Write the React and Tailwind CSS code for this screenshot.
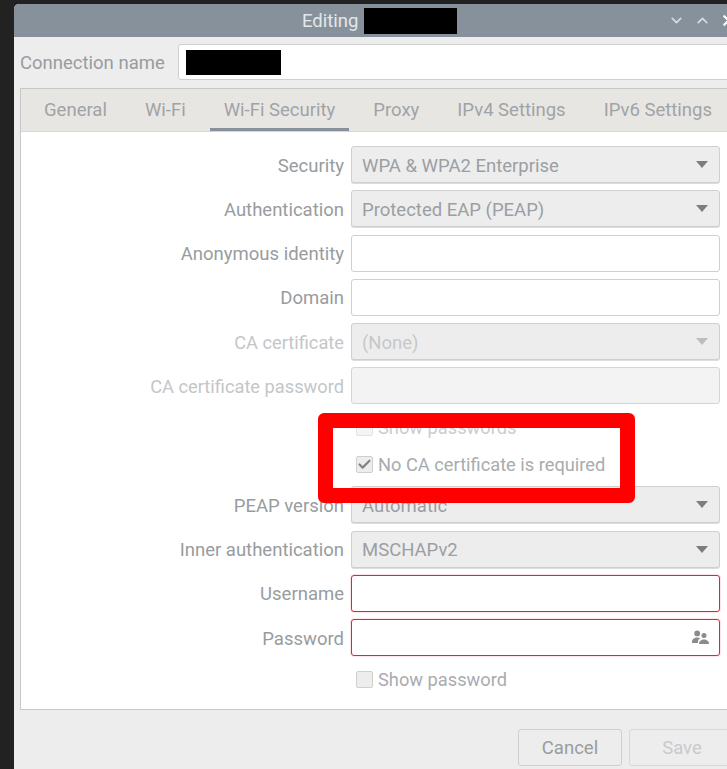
import React from "react";
import { ChevronDown, ChevronUp, X, Check } from "lucide-react";

const TABS = [
  { label: "General" },
  { label: "Wi-Fi" },
  { label: "Wi-Fi Security", active: true },
  { label: "Proxy" },
  { label: "IPv4 Settings" },
  { label: "IPv6 Settings" },
];

function Redacted({ className }) {
  return <div className={`bg-black ${className}`} />;
}

function Row({ label, dim, className = "", children }) {
  return (
    <div className={`flex h-[37px] items-center gap-[7px] ${className}`}>
      <span className={`w-[323px] pt-[2px] text-right ${dim ? "text-[18.25px] text-[#c4c6c8]" : "text-[#989ca0]"}`}>{label}</span>
      {children}
    </div>
  );
}

function Combo({ value, dim }) {
  return (
    <div className="flex h-full w-[369px] items-center justify-between rounded-[3px] border border-[#cfcfcd] bg-[#ededed] pl-[10px] pr-[11px] shadow-[0_1px_0_#dddddd]">
      <span className={`pt-[2px] ${dim ? "text-[#c6c8ca]" : "text-[#9b9fa3]"}`}>{value}</span>
      <div className={`h-0 w-0 border-x-[6px] border-t-[7px] border-x-transparent ${dim ? "border-t-[#bdbdbd]" : "border-t-[#7d7d7d]"}`} />
    </div>
  );
}

function Entry({ error, disabled, children }) {
  const look = error
    ? "border-[#e0272f] bg-white shadow-[0_0_0_1px_rgba(230,80,90,0.15)]"
    : disabled
      ? "border-[#d5d5d3] bg-[#f3f3f3]"
      : "border-[#cfcfcd] bg-white";
  return (
    <div className={`flex h-full w-[369px] items-center justify-end rounded-[3px] border pr-[10px] ${look}`}>
      {children}
    </div>
  );
}

function CheckRow({ label, checked, className = "" }) {
  return (
    <div className={`flex h-[22px] items-center pl-[335px] text-[18.25px] text-[#a8acb0] ${className}`}>
      <div className="flex h-[17px] w-[17px] items-center justify-center rounded-[2px] border border-[#cfcfcd] bg-[#ededed]">
        {checked && <Check size={15} strokeWidth={3.5} className="text-[#858585]" />}
      </div>
      <span className="ml-[5px] pt-[2px]">{label}</span>
    </div>
  );
}

function PeopleIcon() {
  return (
    <svg width="17" height="15" viewBox="0 0 17 15" className="text-[#8b8b8b]" fill="currentColor">
      <circle cx="5.2" cy="3.4" r="2.9" />
      <circle cx="12" cy="5.6" r="2.5" />
      <path d="M0 12c0-3 2.4-4.6 5.2-4.6 1.1 0 2.2.3 3 .8C6.8 9 6 10.3 6 12v1H0z" />
      <path d="M7 14c0-3 2.3-4.6 5-4.6S17 11 17 14z" />
    </svg>
  );
}

export default function App() {
  return (
    <div className="h-[769px] w-[727px] overflow-hidden bg-[#222222] pl-[14px] pt-[4px] font-['Roboto',sans-serif] text-[18.5px] leading-[22px]">
      <div className="relative h-[765px] w-[760px] overflow-hidden rounded-tl-[5px] bg-[#ededed]">
        {/* Title bar */}
        <div className="flex h-[33px] items-center bg-[#87919b] pl-[288px]">
          <span className="text-[#e4e7ea]">Editing</span>
          <Redacted className="ml-[6px] h-[26px] w-[93px]" />
          <div className="ml-[211px] flex items-center gap-[9px] text-[#d5d9dc]">
            <ChevronDown size={17} strokeWidth={2.5} />
            <ChevronUp size={17} strokeWidth={2.5} />
            <X size={17} strokeWidth={3} className="text-white" />
          </div>
        </div>

        {/* Connection name */}
        <div className="mt-[7px] flex h-[36px] items-center pl-[6px]">
          <span className="w-[158px] pt-[2px] text-[#989ca0]">Connection name</span>
          <div className="flex h-full flex-1 items-center rounded-[3px] border border-[#cfcfcd] bg-white pl-[7px]">
            <Redacted className="h-[25px] w-[95px]" />
          </div>
        </div>

        {/* Notebook */}
        <div className="ml-[6px] mt-[8px] h-[622px] border border-[#c8c8c6] bg-white">
          <div className="flex h-[43px] gap-[10px] border-b border-[#d8d6d3] bg-[#e8e6e3] pl-[9px]">
            {TABS.map((tab) => (
              <div
                key={tab.label}
                className={`flex h-full items-center px-[14px] text-[#a0a3a6] ${tab.active ? "border-b-[3px] border-[#87919b] pt-[3px]" : ""}`}
              >
                {tab.label}
              </div>
            ))}
          </div>

          <div className="flex flex-col pt-[14px]">
            <div className="flex flex-col gap-[7.25px]">
              <Row label="Security"><Combo value="WPA & WPA2 Enterprise" /></Row>
              <Row label="Authentication"><Combo value="Protected EAP (PEAP)" /></Row>
              <Row label="Anonymous identity"><Entry /></Row>
              <Row label="Domain"><Entry /></Row>
              <Row label="CA certificate" dim><Combo value="(None)" dim /></Row>
              <Row label="CA certificate password" dim><Entry disabled /></Row>
            </div>
            <CheckRow label="Show passwords" className="mt-[12px] opacity-60" />
            <CheckRow label="No CA certificate is required" checked className="mt-[15px]" />
            <div className="mt-[11px] flex flex-col gap-[7.25px]">
              <Row label="PEAP version"><Combo value="Automatic" /></Row>
              <Row label="Inner authentication"><Combo value="MSCHAPv2" /></Row>
              <Row label="Username"><Entry error /></Row>
              <Row label="Password"><Entry error><PeopleIcon /></Entry></Row>
            </div>
            <CheckRow label="Show password" className="mt-[12px]" />
          </div>
        </div>

        {/* Dialog buttons */}
        <div className="ml-[504px] mt-[19px] flex gap-[7px]">
          <div className="flex h-[37px] w-[104px] items-center justify-center rounded-[3px] border border-[#cfcfcd] bg-[#ededed] text-[#989ca0]">Cancel</div>
          <div className="flex h-[37px] w-[106px] items-center justify-center rounded-[3px] border border-[#d8d8d6] bg-[#ededed] text-[#c8cacc]">Save</div>
        </div>

        {/* Red highlight drawn over the dialog */}
        <div className="absolute left-[304px] top-[409px] h-[90px] w-[317px] rounded-[6px] border-[15px] border-[#ff0000]" />
      </div>
    </div>
  );
}
